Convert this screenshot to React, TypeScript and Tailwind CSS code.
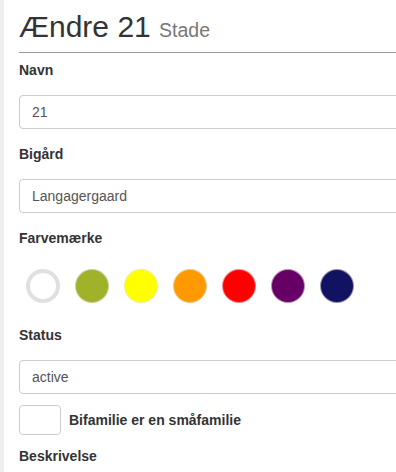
import React from "react";

const colors = ["#a0b12a", "#ffff00", "#ff9900", "#ff0000", "#660066", "#121263"];

function Label({ children, className = "" }: { children: React.ReactNode; className?: string }) {
  return <div className={`text-[14px] font-bold leading-[20px] text-[#333] ${className}`}>{children}</div>;
}

function Input({ value, className = "" }: { value: string; className?: string }) {
  return (
    <div
      className={`flex h-[34px] w-[420px] items-center rounded-[4px] border border-[#ccc] px-[12px] text-[14px] text-[#555] ${className}`}
    >
      {value}
    </div>
  );
}

export default function App() {
  return (
    <div className="flex h-[472px] w-[396px] overflow-hidden bg-white font-['Liberation_Sans',Arial,sans-serif] text-[#333]">
      <div className="w-[4px] shrink-0 bg-[#eee]" />
      <div className="min-w-0 flex-1 pl-[15px]">
        <div className="mt-[10px] border-b border-[#999] pb-[9px]">
          <h2 className="h-[33px] whitespace-nowrap text-[30px] font-normal leading-[33px] text-[#333]">
            Ændre 21 <span className="text-[19.5px] leading-none text-[#777]">Stade</span>
          </h2>
        </div>

        <Label className="mt-[7px]">Navn</Label>
        <Input value="21" className="mt-[15px]" />

        <Label className="mt-[15px]">Bigård</Label>
        <Input value="Langagergaard" className="mt-[15px]" />

        <Label className="mt-[15px]">Farvemærke</Label>
        <div className="mt-[21px] flex gap-[15px] pl-[7px]">
          <div className="h-[34px] w-[34px] rounded-full border-[4px] border-[#e0e0e0] bg-white" />
          {colors.map((c) => (
            <div
              key={c}
              className="h-[34px] w-[34px] rounded-full border border-[#e6e6e6]/60"
              style={{ backgroundColor: c }}
            />
          ))}
        </div>

        <Label className="mt-[22px]">Status</Label>
        <Input value="active" className="mt-[15px]" />

        <div className="mt-[11px] flex items-center gap-[8px]">
          <div className="h-[30px] w-[42px] rounded-[4px] border border-[#ccc]" />
          <span className="text-[14px] font-bold text-[#333]">Bifamilie er en småfamilie</span>
        </div>

        <Label className="mt-[11px]">Beskrivelse</Label>
      </div>
    </div>
  );
}
